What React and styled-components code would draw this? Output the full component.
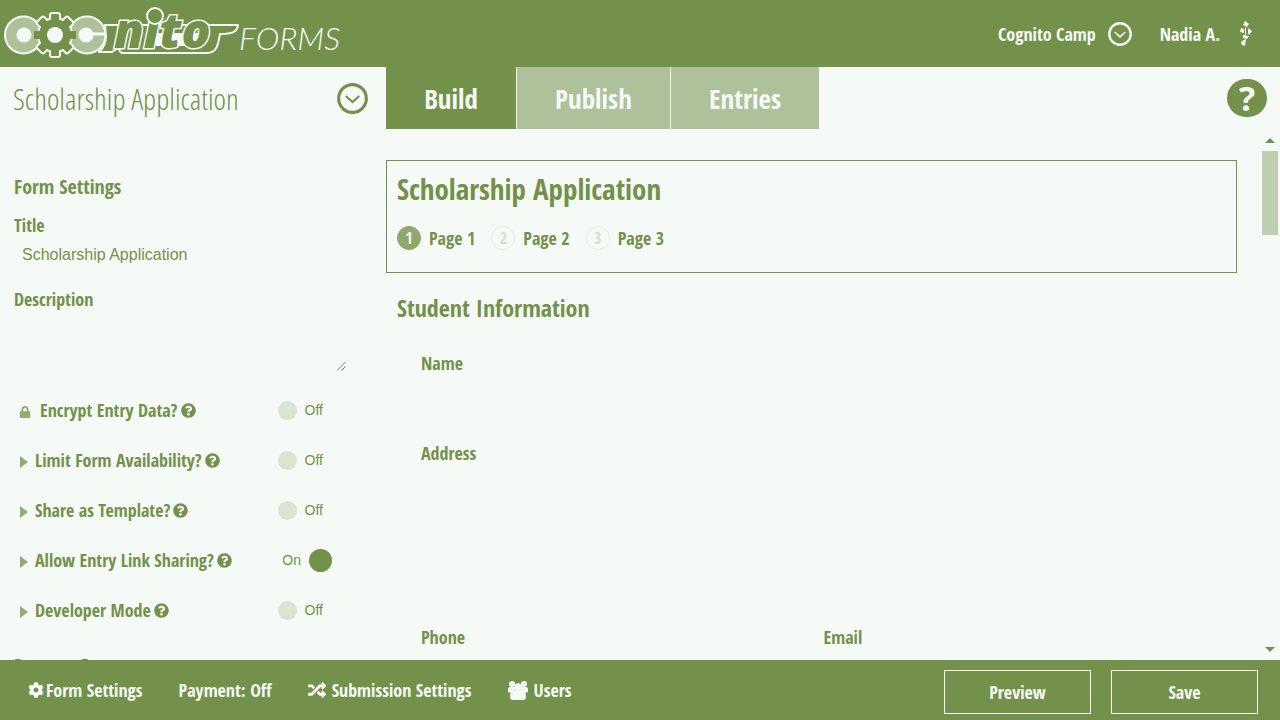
import React from "react";
import styled, { createGlobalStyle } from "styled-components";
import { FaQuestionCircle, FaLock, FaCog, FaRandom } from "react-icons/fa";

const green = "#73914b";
const paper = "#f5faf6";
const condensed = `"Open Sans Condensed", "Liberation Sans Narrow", "Open Sans", sans-serif`;
const condensedLight = `"Open Sans Condensed Light", "Open Sans Light Condensed", "Roboto Condensed Light", "Roboto Condensed", "Liberation Sans Narrow", "Open Sans Condensed", sans-serif`;

const Global = createGlobalStyle`
  * { box-sizing: border-box; }
  body { margin: 0; background: ${paper}; color: ${green}; font-family: ${condensed}; font-weight: 700; }
  button, input, textarea { font: inherit; color: inherit; border: 0; background: none; padding: 0; margin: 0; border-radius: 0; }
  a { color: inherit; text-decoration: none; }
  h1, h2, h3 { margin: 0; }
  svg { display: block; }
`;

const Shell = styled.div`
  height: 100vh;
  display: grid;
  grid-template-rows: 67px minmax(0, 1fr) 60px;
`;
const Header = styled.header`
  background: ${green};
  color: ${paper};
  display: flex;
  align-items: center;
  justify-content: space-between;
  padding: 0 28px 0 0;
`;
const Account = styled.nav`
  display: flex;
  align-items: center;
  font-size: 18px;
  button { display: flex; align-items: center; gap: 12px; }
`;
const User = styled.a`
  display: flex;
  align-items: center;
  gap: 20px;
  margin-left: 28px;
`;
const Body = styled.div`
  display: grid;
  grid-template-columns: 386px minmax(0, 1fr);
  min-height: 0;
`;
const Sidebar = styled.aside`
  min-height: 0;
  overflow: hidden;
`;
const FormPicker = styled.div`
  display: flex;
  align-items: center;
  justify-content: space-between;
  height: 62px;
  padding: 0 18px 0 13px;
  font-family: ${condensedLight};
  font-size: 30px;
  font-weight: 300;
`;
const Settings = styled.section`
  padding: 46px 40px 0 14px;
`;
const SectionTitle = styled.h2`
  font-size: 20px;
  line-height: 24px;
`;
const Field = styled.div`
  display: flex;
  flex-direction: column;
  margin-top: 14px;
  label { font-size: 18px; line-height: 24px; }
`;
const TextInput = styled.input`
  height: 36px;
  padding: 0 8px;
  font: 400 16px "Liberation Sans", sans-serif;
`;
const AreaWrap = styled.div`
  position: relative;
`;
const TextArea = styled.textarea`
  display: block;
  width: 100%;
  height: 60px;
  resize: none;
  font: 400 16px "Liberation Sans", sans-serif;
`;
const Grip = styled.svg`
  position: absolute;
  right: 0;
  bottom: 0;
`;
const ToggleList = styled.div`
  margin: 14px 14px 0 0;
`;
const ToggleRow = styled.div`
  display: grid;
  grid-template-columns: ${(p) => (p.$wide ? 26 : 21)}px auto 20px 1fr;
  align-items: center;
  height: 50px;
  font-size: 18px;
  > svg { margin: 4px 0 0 5px; }
`;
const HelpDot = styled.button`
  margin-left: 3px;
`;
const Switch = styled.label`
  justify-self: end;
  display: flex;
  align-items: center;
  flex-direction: ${(p) => (p.$on ? "row-reverse" : "row")};
  gap: 8px;
  margin-right: ${(p) => (p.$on ? 0 : 9)}px;
  font: 400 14px "Liberation Sans", sans-serif;
  input {
    appearance: none;
    width: ${(p) => (p.$on ? 23 : 19)}px;
    height: ${(p) => (p.$on ? 23 : 19)}px;
    border-radius: 50%;
    background: ${(p) => (p.$on ? green : "#dbe4d3")};
  }
`;
const NextHeading = styled(SectionTitle)`
  margin-top: 18px;
  font-size: 18px;
`;
const Main = styled.main`
  min-width: 0;
  min-height: 0;
  display: grid;
  grid-template-rows: 62px minmax(0, 1fr);
`;
const TabBar = styled.div`
  display: flex;
  align-items: center;
  justify-content: space-between;
  padding-right: 13px;
`;
const Tabs = styled.nav`
  display: flex;
  gap: 1px;
  height: 62px;
`;
const Tab = styled.button`
  width: ${(p) => p.$w}px;
  font-size: 27px;
  color: ${paper};
  background: ${(p) => (p.$active ? green : "#afc19a")};
`;
const HelpButton = styled.button`
  width: 40px;
  height: 38px;
  border-radius: 20px;
  background: ${green};
  color: ${paper};
  font: 700 34px/38px "Open Sans", sans-serif;
`;
const Workspace = styled.div`
  display: flex;
  min-height: 0;
`;
const Canvas = styled.div`
  flex: 1;
  min-width: 0;
  overflow: hidden;
  padding: 31px 25px 0 0;
`;
const FormHead = styled.div`
  border: 1px solid ${green};
  height: 113px;
  padding: 10px;
  h1 { font-size: 29px; line-height: 36px; }
`;
const Steps = styled.ol`
  list-style: none;
  display: flex;
  gap: 16px;
  margin: 19px 0 0;
  padding: 0;
  font-size: 18px;
`;
const Step = styled.li`
  display: flex;
  align-items: center;
  gap: 8px;
  span {
    width: 24px;
    height: 24px;
    border-radius: 50%;
    text-align: center;
    font-size: 16px;
    line-height: 22px;
    border: 1px solid ${(p) => (p.$active ? "#8fa86f" : "#e6eee2")};
    background: ${(p) => (p.$active ? "#8fa86f" : paper)};
    color: ${(p) => (p.$active ? paper : "#d5dfcb")};
  }
`;
const FormFields = styled.section`
  padding: 19px 11px 0;
  h2 { font-size: 24px; line-height: 32px; }
`;
const FieldGrid = styled.div`
  display: grid;
  grid-template-columns: 1fr 1fr;
  padding: 27px 0 0 24px;
  font-size: 18px;
  line-height: 24px;
`;
const FieldLabel = styled.div`
  grid-column: ${(p) => (p.$half ? "auto" : "1 / -1")};
  height: ${(p) => p.$h}px;
`;
const Scrollbar = styled.div`
  width: 18px;
  padding: 9px 2px 8px 0;
  display: flex;
  flex-direction: column;
  align-items: center;
  button { width: 16px; display: flex; justify-content: center; }
`;
const Thumb = styled.div`
  width: 16px;
  height: 84px;
  margin: 8px 0 auto;
  background: #bfcdb0;
`;
const Footer = styled.footer`
  background: ${green};
  color: ${paper};
  display: flex;
  align-items: center;
  justify-content: space-between;
  padding: 0 22px 0 28px;
  font-size: 18px;
`;
const FooterNav = styled.nav`
  display: flex;
  gap: 36px;
  a { display: flex; align-items: center; gap: 6px; }
  a:first-child { gap: 2px; }
`;
const Actions = styled.div`
  display: flex;
  gap: 20px;
  margin-top: 4px;
`;
const Action = styled.button`
  width: 147px;
  height: 44px;
  border: 1px solid ${paper};
`;

const ChevronCircle = ({ size }) => (
  <svg width={size} height={size} viewBox="0 0 30 30" fill="none" stroke="currentColor" aria-hidden="true">
    <circle cx="15" cy="15" r="13.4" strokeWidth="3" />
    <path d="M8.5 12.5 15 18.5 21.5 12.5" strokeWidth="2" />
  </svg>
);

const Arrow = () => (
  <svg width="9" height="12" viewBox="0 0 9 12" fill="#93ab74" aria-hidden="true">
    <path d="M1 0 9 6 1 12Z" />
  </svg>
);

const Group = () => (
  <svg width="20" height="19" viewBox="0 0 20 19" fill="currentColor" aria-hidden="true">
    <circle cx="4" cy="3" r="3" />
    <circle cx="16" cy="3" r="3" />
    <circle cx="10" cy="6.500" r="4.300" />
    <path d="M2 6H6L7 10 3 12 0 11V8Q0 6 2 6ZM18 6H14L13 10 17 12 20 11V8Q20 6 18 6Z" />
    <path d="M5 10H15Q18 11 18 16 18 19 15 19H5Q2 19 2 16 2 11 5 10Z" />
  </svg>
);

const teeth = [0, 45, 90, 135, 180, 225, 270, 315];
const outerTeeth = teeth.filter((a) => a % 180 !== 90);

const Logo = () => (
  <svg width="346" height="66" viewBox="0 0 346 66" role="img" aria-label="Cognito Forms">
    <circle cx="23.500" cy="34" r="18.500" fill="#afc19a" stroke={paper} strokeWidth="2" />
    <circle cx="24" cy="34" r="7.500" fill={paper} />
    <circle cx="87" cy="34" r="18.500" fill="#afc19a" stroke={paper} strokeWidth="2" />
    <circle cx="86" cy="34" r="7.500" fill={paper} />
    <g fill={paper} stroke={paper} strokeWidth="4">
      {outerTeeth.map((a) => (
        <rect key={a} x="51" y="13" width="8" height="12" rx="1" transform={`rotate(${a} 55 34)`} />
      ))}
      <circle cx="55" cy="34" r="16" />
    </g>
    <g fill={green}>
      {teeth.map((a) => (
        <rect key={a} x="51" y="13" width="8" height="12" rx="1" transform={`rotate(${a} 55 34)`} />
      ))}
      <circle cx="55" cy="34" r="16" />
    </g>
    <circle cx="55" cy="34" r="8" fill={paper} />
    <path
      d="M105 24H238C237 31 233 33 220 33C218 44 217 52 207 52H122Q118 50 120 46L112 51H99Q106 45 106 35Z"
      fill={green}
      stroke={paper}
      strokeWidth="2"
      strokeLinejoin="round"
    />
    <path d="M87 33H106" stroke={paper} strokeWidth="3" />
    <path d="M150 32H201L197 45H146Z" fill={paper} />
    <text
      x="114"
      y="47"
      fontFamily="Open Sans, sans-serif"
      fontWeight="800"
      fontStyle="italic"
      fontSize="48"
      fill={green}
      stroke={paper}
      strokeWidth="3"
      paintOrder="stroke"
    >
      nito
    </text>
    <circle cx="155" cy="15" r="8" fill={green} stroke={paper} strokeWidth="2" />
    <text x="239" y="49" fontFamily="Lato, sans-serif" fontWeight="300" fontStyle="italic" fontSize="32" fill={paper}>
      FORMS
    </text>
  </svg>
);

const Avatar = () => (
  <svg width="12" height="26" viewBox="0 0 12 26" fill={paper} aria-hidden="true">
    <path d="M5 0 9 3 7 6 3 4ZM1 7 4 8 4 12 0 11ZM5 6H6V16H5ZM8 7 12 10 9 14 8 12ZM3 14 9 15 7 18 3 17ZM2 20 6 18 5 25 2 24 1 22Z" />
  </svg>
);

const toggles = [
  { label: "Encrypt Entry Data?", lock: true },
  { label: "Limit Form Availability?" },
  { label: "Share as Template?" },
  { label: "Allow Entry Link Sharing?", on: true },
  { label: "Developer Mode" },
];

export default function App() {
  return (
    <Shell>
      <Global />
      <Header>
        <Logo />
        <Account>
          <button>
            Cognito Camp
            <ChevronCircle size={24} />
          </button>
          <User href="#account">
            Nadia A.
            <Avatar />
          </User>
        </Account>
      </Header>
      <Body>
        <Sidebar>
          <FormPicker>
            <span>Scholarship Application</span>
            <button aria-label="Choose form">
              <ChevronCircle size={31} />
            </button>
          </FormPicker>
          <Settings>
            <SectionTitle>Form Settings</SectionTitle>
            <Field>
              <label htmlFor="title">Title</label>
              <TextInput id="title" defaultValue="Scholarship Application" />
            </Field>
            <Field>
              <label htmlFor="description">Description</label>
              <AreaWrap>
                <TextArea id="description" />
                <Grip width="9" height="9" viewBox="0 0 9 9" stroke={green} fill="none">
                  <path d="M0 8.500 8.500 0M4.500 8.500 8.500 4.500" />
                </Grip>
              </AreaWrap>
            </Field>
            <ToggleList>
              {toggles.map((t, i) => (
                <ToggleRow key={t.label} $wide={t.lock}>
                  {t.lock ? <FaLock size={12} color="#93ab74" /> : <Arrow />}
                  <label htmlFor={`toggle-${i}`}>{t.label}</label>
                  <HelpDot aria-label={`Help: ${t.label}`}>
                    <FaQuestionCircle size={15} />
                  </HelpDot>
                  <Switch $on={t.on}>
                    <input id={`toggle-${i}`} type="checkbox" defaultChecked={t.on} />
                    {t.on ? "On" : "Off"}
                  </Switch>
                </ToggleRow>
              ))}
            </ToggleList>
            <NextHeading>Payment F</NextHeading>
          </Settings>
        </Sidebar>
        <Main>
          <TabBar>
            <Tabs>
              <Tab $active $w={130}>Build</Tab>
              <Tab $w={153}>Publish</Tab>
              <Tab $w={148}>Entries</Tab>
            </Tabs>
            <HelpButton aria-label="Help">?</HelpButton>
          </TabBar>
          <Workspace>
            <Canvas>
              <FormHead>
                <h1>Scholarship Application</h1>
                <Steps>
                  {[1, 2, 3].map((n) => (
                    <Step key={n} $active={n === 1}>
                      <span>{n}</span>
                      Page {n}
                    </Step>
                  ))}
                </Steps>
              </FormHead>
              <FormFields>
                <h2>Student Information</h2>
                <FieldGrid>
                  <FieldLabel $h={90}>Name</FieldLabel>
                  <FieldLabel $h={184}>Address</FieldLabel>
                  <FieldLabel $half $h={60}>Phone</FieldLabel>
                  <FieldLabel $half $h={60}>Email</FieldLabel>
                </FieldGrid>
              </FormFields>
            </Canvas>
            <Scrollbar>
              <button aria-label="Scroll up">
                <svg width="10" height="5" fill={green}><path d="M5 0 10 5H0Z" /></svg>
              </button>
              <Thumb />
              <button aria-label="Scroll down">
                <svg width="10" height="5" fill={green}><path d="M0 0H10L5 5Z" /></svg>
              </button>
            </Scrollbar>
          </Workspace>
        </Main>
      </Body>
      <Footer>
        <FooterNav>
          <a href="#settings"><FaCog size={16} />Form Settings</a>
          <a href="#payment">Payment: Off</a>
          <a href="#submission"><FaRandom size={18} />Submission Settings</a>
          <a href="#users"><Group />Users</a>
        </FooterNav>
        <Actions>
          <Action>Preview</Action>
          <Action>Save</Action>
        </Actions>
      </Footer>
    </Shell>
  );
}
